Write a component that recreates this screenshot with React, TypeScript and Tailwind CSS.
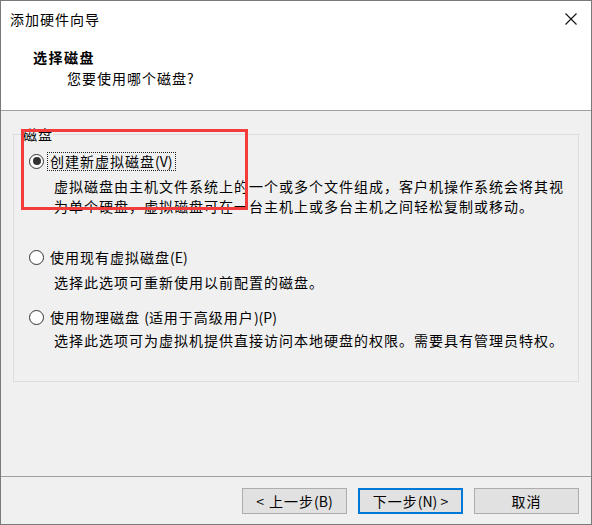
import React from "react";

function Radio({ checked }: { checked?: boolean }) {
  return (
    <span className="w-[15px] h-[15px] rounded-full border border-[#333333] bg-white flex items-center justify-center shrink-0">
      {checked && <span className="w-[8px] h-[8px] rounded-full bg-[#333333]" />}
    </span>
  );
}

function L({ children }: { children: React.ReactNode }) {
  return <span className="tracking-normal">{children}</span>;
}

export default function App() {
  return (
    <div
      className="relative w-[592px] h-[525px] border border-[#7a7a7a] bg-[#f0f0f0] flex flex-col text-black overflow-hidden"
      style={{ fontFamily: "'Noto Sans CJK SC', 'Noto Sans', sans-serif" }}
    >
      {/* Header */}
      <div className="h-[110px] shrink-0 bg-white border-b border-[#a0a0a0] flex flex-col">
        <div className="h-[35px] flex items-center justify-between pl-[9px] pr-[14px]">
          <span className="text-[14px] tracking-[1px] leading-[20px]">添加硬件向导</span>
          <svg width="12" height="12" viewBox="0 0 12 12" className="shrink-0">
            <path d="M0.5 0.5 L11.5 11.5 M11.5 0.5 L0.5 11.5" stroke="#111" strokeWidth="1.1" fill="none" />
          </svg>
        </div>
        <div className="mt-[11px] pl-[32px] text-[14px] tracking-[1.5px] leading-[20px] font-bold">选择磁盘</div>
        <div className="mt-[1px] pl-[66px] text-[14px] tracking-[1px] leading-[20px]">您要使用哪个磁盘?</div>
      </div>

      {/* Body */}
      <div className="flex-1 pt-[15px] pl-[12px] pr-[12px]">
        <fieldset className="border border-[#dcdcdc] h-[256px]">
          <legend className="ml-[9px] text-[14px] tracking-[1px] leading-[16px]">磁盘</legend>
          <div className="flex flex-col pl-[15px]">
            <div className="h-[18px] mt-[10px] flex items-center gap-[4px]">
              <Radio checked />
              <span className="outline-1 outline-dotted outline-[#222] px-[2px] text-[14px] tracking-[1px] leading-[17px]">
                创建新虚拟磁盘<L>(V)</L>
              </span>
            </div>
            <div className="mt-[6px] pl-[25px] text-[14px] tracking-[1px] leading-[20px] whitespace-nowrap">
              虚拟磁盘由主机文件系统上的一个或多个文件组成，客户机操作系统会将其视
              <br />
              为单个硬盘，虚拟磁盘可在一台主机上或多台主机之间轻松复制或移动。
            </div>

            <div className="h-[18px] mt-[32px] flex items-center gap-[6px]">
              <Radio />
              <span className="text-[14px] tracking-[1px] leading-[17px]">
                使用现有虚拟磁盘<L>(E)</L>
              </span>
            </div>
            <div className="mt-[6px] pl-[25px] text-[14px] tracking-[1px] leading-[20px] whitespace-nowrap">
              选择此选项可重新使用以前配置的磁盘。
            </div>

            <div className="h-[18px] mt-[16px] flex items-center gap-[6px]">
              <Radio />
              <span className="text-[14px] tracking-[1px] leading-[17px]">
                使用物理磁盘 <L>(</L>适用于高级用户<L>)(P)</L>
              </span>
            </div>
            <div className="mt-[4px] pl-[25px] text-[14px] tracking-[1px] leading-[20px] whitespace-nowrap">
              选择此选项可为虚拟机提供直接访问本地硬盘的权限。需要具有管理员特权。
            </div>
          </div>
        </fieldset>
      </div>

      {/* Footer */}
      <div className="h-[48px] shrink-0 border-t border-[#a0a0a0] pt-[11px] pr-[12px] flex justify-end items-start gap-[11px]">
        <button className="w-[105px] h-[26px] bg-[#e1e1e1] border border-[#adadad] text-[14px] tracking-[1px] leading-[20px] flex items-center justify-center">
          &lt; 上一步<L>(B)</L>
        </button>
        <button className="w-[105px] h-[26px] bg-[#e1e1e1] border-2 border-[#0078d7] text-[14px] tracking-[1px] leading-[20px] flex items-center justify-center">
          下一步<L>(N) &gt;</L>
        </button>
        <button className="w-[105px] h-[26px] bg-[#e1e1e1] border border-[#adadad] text-[14px] tracking-[1px] leading-[20px] flex items-center justify-center">
          取消
        </button>
      </div>

      {/* Red annotation rectangle */}
      <div className="absolute left-[20px] top-[128px] w-[227px] h-[81px] border-[3px] border-[#f43b3b] pointer-events-none" />
    </div>
  );
}
